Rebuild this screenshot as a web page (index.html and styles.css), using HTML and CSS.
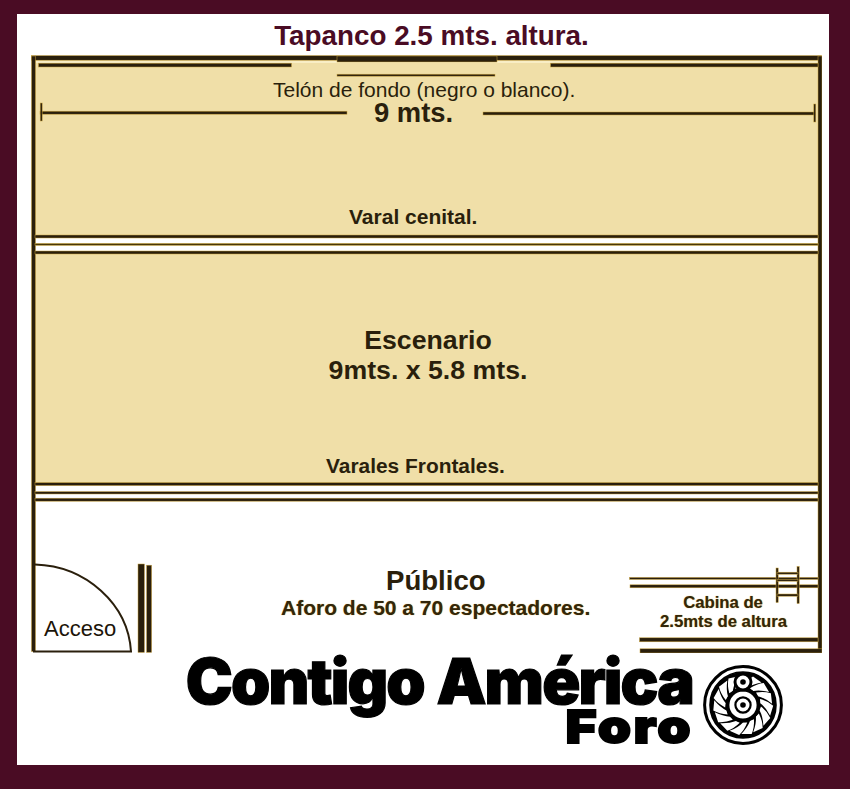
FILE: index.html
```html
<!DOCTYPE html>
<html lang="es">
<head>
<meta charset="utf-8">
<title>Contigo América Foro</title>
<link rel="stylesheet" href="styles.css">
</head>
<body>
<main class="frame">
  <h1 class="title">Tapanco 2.5 mts. altura.</h1>
  <section class="plan">
    <svg class="lines" width="791" height="598" viewBox="31 55 791 598">
      <rect class="tan" x="33" y="57" width="787" height="428"/>
      <rect class="paper" x="35" y="238" width="783" height="13"/>
      <rect class="paper" x="35" y="485" width="783" height="14"/>
      <rect class="pale" x="36" y="60.5" width="782" height="2.5"/>
      <rect class="wall" x="31.5" y="55.6" width="790" height="4.6"/>
      <rect class="wall" x="31.5" y="56" width="4" height="595.5"/>
      <rect class="wall" x="818" y="56" width="4" height="597"/>
      <rect class="wall" x="337" y="56" width="160" height="6"/>
      <rect class="wall" x="38.5" y="63.2" width="253" height="3.8"/>
      <rect class="wall" x="550.5" y="63.2" width="267.5" height="3.8"/>
      <rect class="thin" x="337" y="74.2" width="158" height="2"/>
      <rect class="thin" x="40" y="111.2" width="307" height="3"/>
      <rect class="thin" x="40.2" y="103" width="2" height="18"/>
      <rect class="thin" x="483" y="112" width="332" height="3"/>
      <rect class="thin" x="813.8" y="104" width="2" height="18"/>
      <rect class="thin" x="35" y="235" width="783" height="3"/>
      <rect class="rule" x="35" y="243.4" width="783" height="2"/>
      <rect class="thin" x="35" y="251" width="783" height="3"/>
      <rect class="thin" x="35" y="482.6" width="783" height="3"/>
      <rect class="thin" x="35" y="491.6" width="783" height="2.4"/>
      <rect class="thin" x="35" y="498.2" width="783" height="3"/>
      <path class="door" d="M35 564.5C86 566 128 604 131 651.5H33"/>
      <rect class="wall" x="138" y="564" width="6.4" height="88.4"/>
      <rect class="wall" x="146.6" y="565.2" width="5" height="87.2"/>
      <rect class="thin" x="629.5" y="577.4" width="188.5" height="2"/>
      <rect class="thin" x="630" y="584.8" width="188" height="3"/>
      <rect class="thin" x="776" y="568" width="2.2" height="34.5"/>
      <rect class="thin" x="797" y="566.5" width="2.2" height="37"/>
      <rect class="thin" x="777" y="572.2" width="21" height="2"/>
      <rect class="thin" x="777" y="579.2" width="21" height="2"/>
      <rect class="thin" x="777" y="594" width="21" height="2.2"/>
      <rect class="wall" x="639.5" y="637.8" width="178.5" height="4"/>
      <rect class="wall" x="640" y="648.8" width="182" height="4.2"/>
    </svg>
    <p class="label backdrop">Telón de fondo (negro o blanco).</p>
    <p class="label width">9 mts.</p>
    <p class="label cenital">Varal cenital.</p>
    <p class="label stage">Escenario<br>9mts. x 5.8 mts.</p>
    <p class="label frontal">Varales Frontales.</p>
    <p class="label public">Público</p>
    <p class="label capacity">Aforo de 50 a 70 espectadores.</p>
    <p class="label access">Acceso</p>
    <p class="label booth">Cabina de<br>2.5mts de altura</p>
  </section>
  <footer class="brand">
    <div class="wordmark">
      <span class="brand-main">Contigo América</span>
      <span class="brand-sub">Foro</span>
    </div>
    <svg class="emblem" width="82" height="82" viewBox="-41 -41 82 82" aria-hidden="true">
      <defs>
        <path id="blade" d="M-.5-18Q4-25 10-28.5L18.5-22.5Q9.5-21 3.6-17Z"/>
      </defs>
      <circle r="38.4" class="ring"/>
      <circle r="33" class="ring-thin"/>
      <g class="blades">
        <use href="#blade" transform="rotate(336)"/>
        <use href="#blade" transform="rotate(0)"/>
        <use href="#blade" transform="rotate(24)"/>
        <use href="#blade" transform="rotate(48)"/>
        <use href="#blade" transform="rotate(72)"/>
        <use href="#blade" transform="rotate(96)"/>
        <use href="#blade" transform="rotate(120)"/>
        <use href="#blade" transform="rotate(144)"/>
        <use href="#blade" transform="rotate(168)"/>
        <use href="#blade" transform="rotate(192)"/>
        <use href="#blade" transform="rotate(216)"/>
        <use href="#blade" transform="rotate(240)"/>
        <use href="#blade" transform="rotate(264)"/>
        <use href="#blade" transform="rotate(288)"/>
        <use href="#blade" transform="rotate(312)"/>
      </g>
      <circle r="15.4" class="hub"/>
      <circle r="7.6" class="hub-thin"/>
      <circle r="2.8" class="dot"/>
      <circle cy="-23" r="8" class="hub-small"/>
      <circle cy="-23" r="2.8" class="dot"/>
    </svg>
  </footer>
</main>
</body>
</html>
```
FILE: styles.css
```css
* { box-sizing: border-box; }
html, body { margin: 0; padding: 0; }
body { background: #4a0c24; font-family: "Liberation Sans", Arial, sans-serif; }

.frame {
  width: 850px;
  height: 789px;
  background: #fff;
  border: solid #4a0c24;
  border-width: 14px 21px 24px 17px;
  padding: 0 7px 0 14px;
  display: flex;
  flex-direction: column;
}

.title {
  margin: 0;
  height: 41px;
  padding: 6px 0 0 10px;
  font-size: 27.8px;
  line-height: 32px;
  font-weight: 700;
  text-align: center;
  color: #4a0c24;
}

.plan { position: relative; width: 791px; height: 598px; flex: none; }
.lines { display: block; }

.tan { fill: #f0dfa8; }
.paper { fill: #fff; }
.pale { fill: #f9eec5; }
.wall, .thin { fill: #2a1f0c; stroke: #c9a23c; stroke-width: .5; }
.rule { fill: #4a3808; stroke: #d4ae40; stroke-width: .5; }
.door { fill: none; stroke: #2a1f0c; stroke-width: 2; }

.label { position: absolute; margin: 0; color: #2a1f0c; text-align: center; white-space: nowrap; font-weight: 700; }
.backdrop { left: 242px; top: 23px; font-size: 21px; line-height: 24px; font-weight: 400; }
.width { left: 343px; top: 43px; font-size: 27.4px; line-height: 30px; }
.cenital { left: 318px; top: 150px; font-size: 21px; line-height: 24px; }
.stage { left: 297px; top: 270px; width: 200px; font-size: 26.7px; line-height: 30px; }
.frontal { left: 295px; top: 399px; font-size: 20.9px; line-height: 24px; }
.public { left: 355px; top: 511px; font-size: 27.6px; line-height: 30px; }
.capacity { left: 250px; top: 541px; font-size: 21px; line-height: 24px; color: #33260a; text-shadow: 0 0 1px #c9a23c; }
.access { left: 13px; top: 562px; font-size: 22px; line-height: 24px; font-weight: 400; color: #1c1408; }
.booth { left: 629px; top: 539px; width: 126px; font-size: 16.7px; line-height: 18.5px; color: #33260a; text-shadow: 0 0 1px #c9a23c; }

.brand {
  display: flex;
  justify-content: flex-end;
  align-items: flex-start;
  gap: 9px;
  padding-right: 38px;
}
.wordmark { display: flex; flex-direction: column; align-items: flex-end; }
.brand-main {
  font-family: Inter, "Liberation Sans", sans-serif;
  font-weight: 900;
  font-size: 63px;
  line-height: 56px;
  letter-spacing: -1.9px;
  word-spacing: 2px;
  color: #000;
  -webkit-text-stroke: 1.2px #000;
}
.brand-sub {
  font-family: Inter, "Liberation Sans", sans-serif;
  font-weight: 900;
  font-size: 46px;
  line-height: 35px;
  letter-spacing: 2px;
  color: #000;
  -webkit-text-stroke: 1.8px #000;
  transform: scaleX(1.16);
  transform-origin: right center;
}
.emblem { display: block; margin-top: 11px; flex: none; }
.ring { fill: #fff; stroke: #000; stroke-width: 3; }
.ring-thin { fill: #000; stroke: #000; stroke-width: 1.6; }
.blades { fill: #fff; }
.hub { fill: #fff; stroke: #000; stroke-width: 3.6; }
.hub-thin { fill: #fff; stroke: #000; stroke-width: 2.2; }
.hub-small { fill: #fff; stroke: #000; stroke-width: 3; }
.dot { fill: #000; }
```
